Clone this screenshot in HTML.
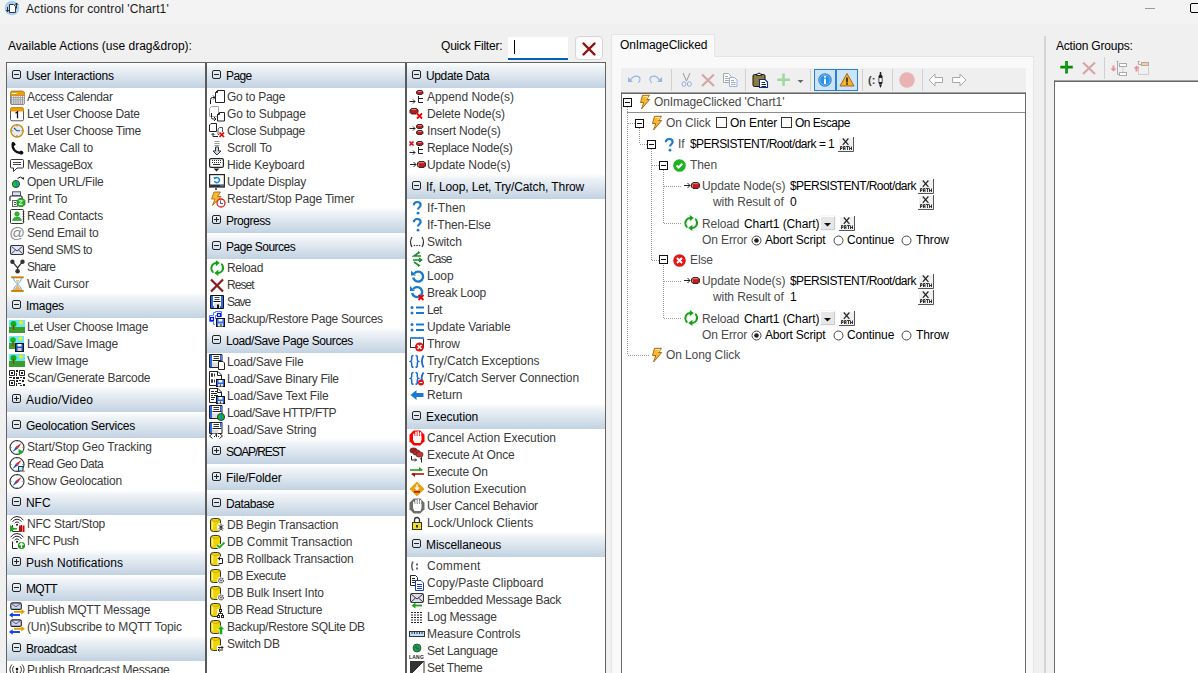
<!DOCTYPE html>
<html><head><meta charset="utf-8"><style>
*{box-sizing:border-box} svg{display:block;overflow:visible}
body{margin:0;width:1198px;height:673px;overflow:hidden;background:#f0f0f0;position:relative;font-family:'Liberation Sans',sans-serif;font-size:12px;color:#000}
.abs{position:absolute}
.title{position:absolute;left:0;top:0;width:1198px;height:24px;background:#f3f3f3}
.lp{position:absolute;left:6px;top:62px;width:600px;height:620px;border:1px solid #646464;background:#fff}
.col{position:absolute;top:0;width:198px;height:620px;background:#fff;overflow:hidden}
.sep{position:absolute;top:0;width:2px;height:620px;background:#5a5a5a}
.gh{height:25px;position:relative;background:linear-gradient(#fdfefe,#eff3f7 18%,#c2d2e2);white-space:nowrap}
.gap{height:1px}
.box{position:absolute;left:5px;top:7px;width:9px;height:9px}
.box svg{display:block}
.ght{position:absolute;left:19px;top:6px;line-height:14px;color:#000;letter-spacing:-0.05px}
.it{height:17px;position:relative;white-space:nowrap}
.ic{position:absolute;left:2px;top:1px;width:16px;height:16px}
.ic svg{display:block}
.itt{position:absolute;left:20px;top:2px;line-height:15px;color:#3a3a3a;letter-spacing:-0.3px}
.t{position:absolute;white-space:nowrap;line-height:14px}
</style></head>
<body>
<div class="title"></div><div class="abs" style="left:4px;top:0px;width:16px;height:16px"><svg width="16" height="16" viewBox="0 0 16 16"><circle cx="8" cy="8" r="7.3" fill="#a6cff6"/><path d="M5.5 4.5h4l2 2v6h-6z" fill="#fff" stroke="#222" stroke-width="0.9"/><path d="M3.5 7v4.5M2 10l1.5 1.8 1.5-1.8M12.5 3v5.5M11 4.8l1.5-1.8 1.5 1.8" stroke="#222" stroke-width="0.9" fill="none"/></svg></div><div class="t" style="left:26px;top:2px;color:#1a1a1a;letter-spacing:0.1px">Actions for control 'Chart1'</div><div class="abs" style="left:1145px;top:8px;width:10px;height:1px;background:#999"></div><div class="abs" style="left:1190px;top:3px;width:14px;height:10px;border:1.5px solid #000;border-radius:2px"></div><div class="t" style="left:8px;top:39px">Available Actions (use drag&amp;drop):</div><div class="t" style="left:441px;top:39px;letter-spacing:-0.2px">Quick Filter:</div><div class="abs" style="left:508px;top:37px;width:60px;height:23px;background:#fff;border-bottom:2px solid #005fb8"></div><div class="abs" style="left:514px;top:40px;width:1px;height:14px;background:#000"></div><div class="abs" style="left:575px;top:36px;width:28px;height:24px;background:#fbfbfb;border:1px solid #d5d5d5;border-radius:4px"></div><div class="abs" style="left:581px;top:41px;width:16px;height:16px"><svg width="16" height="16" viewBox="0 0 16 16"><path d="M2.5 2.5l11 11M13.5 2.5l-11 11" stroke="#8a1010" stroke-width="2.4" stroke-linecap="round"/></svg></div><div class="lp"><div class="col" style="left:0"><div class="gh"><span class="box"><svg width="9" height="9" viewBox="0 0 9 9"><rect x="0.5" y="0.5" width="8" height="8" rx="1.5" fill="none" stroke="#222"/><path d="M2 4.5h5" stroke="#222"/></svg></span><span class="ght" style="letter-spacing:-0.175px">User Interactions</span></div>
<div class="it"><span class="ic"><svg width="16" height="16" viewBox="0 0 16 16"><rect x="1.5" y="2.5" width="14" height="13" rx="1.5" fill="#9a9a9a" stroke="#888"/><g fill="#fff"><rect x="3" y="7" width="1.2" height="1.2"/><rect x="5.2" y="7" width="1.2" height="1.2"/><rect x="7.4" y="7" width="1.2" height="1.2"/><rect x="9.6" y="7" width="1.2" height="1.2"/><rect x="11.8" y="7" width="1.2" height="1.2"/><rect x="14" y="7" width="1.2" height="1.2"/><rect x="3" y="9.2" width="1.2" height="1.2"/><rect x="5.2" y="9.2" width="1.2" height="1.2"/><rect x="7.4" y="9.2" width="1.2" height="1.2"/><rect x="9.6" y="9.2" width="1.2" height="1.2"/><rect x="11.8" y="9.2" width="1.2" height="1.2"/><rect x="14" y="9.2" width="1.2" height="1.2"/><rect x="3" y="11.4" width="1.2" height="1.2"/><rect x="5.2" y="11.4" width="1.2" height="1.2"/><rect x="7.4" y="11.4" width="1.2" height="1.2"/><rect x="9.6" y="11.4" width="1.2" height="1.2"/><rect x="11.8" y="11.4" width="1.2" height="1.2"/><rect x="14" y="11.4" width="1.2" height="1.2"/><rect x="3" y="13.4" width="1.2" height="1.2"/><rect x="5.2" y="13.4" width="1.2" height="1.2"/><rect x="7.4" y="13.4" width="1.2" height="1.2"/><rect x="9.6" y="13.4" width="1.2" height="1.2"/><rect x="11.8" y="13.4" width="1.2" height="1.2"/><rect x="14" y="13.4" width="1.2" height="1.2"/></g><path d="M1.5 6V4a1.5 1.5 0 0 1 1.5-1.5h11a1.5 1.5 0 0 1 1.5 1.5v2z" fill="#f5a000" stroke="#e09000"/><path d="M3 4.5h4.5" stroke="#fff" stroke-width="1"/><path d="M3 1v1.5M5 1v1.5M7 1v1.5M9 1v1.5M11 1v1.5M13 1v1.5" stroke="#777" stroke-width="0.8"/></svg></span><span class="itt" style="letter-spacing:-0.342px">Access Calendar</span></div>
<div class="it"><span class="ic"><svg width="16" height="16" viewBox="0 0 16 16"><rect x="1.5" y="1.8" width="13" height="13" rx="1.5" fill="#fff" stroke="#555"/><path d="M1.5 5V3.3a1.5 1.5 0 0 1 1.5-1.5h10a1.5 1.5 0 0 1 1.5 1.5V5z" fill="#f5a000" stroke="#e09000" stroke-width="0.8"/><path d="M6.5 7.2l2-1.5v6.5" stroke="#111" stroke-width="1.3" fill="none"/></svg></span><span class="itt" style="letter-spacing:-0.310px">Let User Choose Date</span></div>
<div class="it"><span class="ic"><svg width="16" height="16" viewBox="0 0 16 16"><circle cx="8" cy="7.8" r="6.2" fill="#ddeef8" stroke="#d08800" stroke-width="1.4"/><path d="M8 2.3v1.2M8 12.1v1.2M2.5 7.8h1.2M12.3 7.8h1.2" stroke="#555" stroke-width="0.8"/><path d="M5 5l3 2.8h3" stroke="#444" stroke-width="1.1" fill="none"/></svg></span><span class="itt" style="letter-spacing:-0.269px">Let User Choose Time</span></div>
<div class="it"><span class="ic"><svg width="16" height="16" viewBox="0 0 16 16"><path d="M4.5 3.8Q2.5 6.5 5.5 10.2Q8.5 13.5 12 12.5" stroke="#111" stroke-width="2.4" fill="none" stroke-linecap="round"/><path d="M2.3 4.5Q2.5 1.8 4.2 1.8Q5.5 2.2 6.8 4.6Q6 6 4.5 6.2z" fill="#111"/><path d="M10.2 13.6Q10.5 11 12 10.6Q14 10.8 14.6 12.8Q14 14.8 12 14.8z" fill="#111"/></svg></span><span class="itt" style="letter-spacing:-0.046px">Make Call to</span></div>
<div class="it"><span class="ic"><svg width="16" height="16" viewBox="0 0 16 16"><path d="M2.5 2.5h11a1 1 0 0 1 1 1v6.5a1 1 0 0 1-1 1h-5.5l-3.5 3.5v-3.5h-2a1 1 0 0 1-1-1v-6.5a1 1 0 0 1 1-1z" fill="#fff" stroke="#333"/><path d="M4 5.5h8M4 7.5h8" stroke="#444"/></svg></span><span class="itt" style="letter-spacing:-0.389px">MessageBox</span></div>
<div class="it"><span class="ic"><svg width="16" height="16" viewBox="0 0 16 16"><circle cx="7" cy="10" r="3.6" fill="#10d020" stroke="#222" stroke-width="0.8"/><path d="M8 6.8q-2 1.5-0.5 3t-1.2 3.4" stroke="#1a7ae0" stroke-width="1.4" fill="none"/><path d="M8.5 4.5q3-3 5.5 0" stroke="#222" stroke-width="1" fill="none"/><path d="M12.3 4.6l2.6 1.2 0.2-2.8z" fill="#222"/></svg></span><span class="itt" style="letter-spacing:-0.217px">Open URL/File</span></div>
<div class="it"><span class="ic"><svg width="16" height="16" viewBox="0 0 16 16"><rect x="3.5" y="0.8" width="8" height="4" fill="#dde0f8" stroke="#444" stroke-width="0.9"/><path d="M1 10V6q0-1 1-1h10q1 0 1 1v4" fill="#fff" stroke="#333" stroke-width="1.2"/><rect x="3.5" y="9.5" width="5" height="6" fill="#eee" stroke="#555" stroke-width="0.9"/><path d="M5 11.5h2M5 13.5h2" stroke="#555"/><path d="M10 7.5h4l2 2v4l-2 2h-4l-2-2v-4z" fill="#22b022" stroke="#188018" stroke-width="0.7"/><path d="M10 9.8h3.5l-3.5 3.5h3.5" stroke="#fff" stroke-width="1" fill="none"/></svg></span><span class="itt" style="letter-spacing:-0.014px">Print To</span></div>
<div class="it"><span class="ic"><svg width="16" height="16" viewBox="0 0 16 16"><rect x="1.5" y="1.5" width="13" height="14" rx="1" fill="#fff" stroke="#333"/><path d="M14.5 3v1.2M14.5 5.5v1.2M14.5 8v1.2M14.5 10.5v1.2M14.5 13v1.2" stroke="#333" stroke-width="1.6"/><circle cx="8" cy="6" r="2.3" fill="#30b830" stroke="#1a801a" stroke-width="0.5"/><path d="M3.5 12.5c0.5-2.5 2-3.5 4.5-3.5s4 1 4.5 3.5z" fill="#30b830" stroke="#1a801a" stroke-width="0.5"/></svg></span><span class="itt" style="letter-spacing:-0.267px">Read Contacts</span></div>
<div class="it"><span class="ic"><svg width="16" height="16" viewBox="0 0 16 16"><text x="0.3" y="13.2" font-size="15.5" font-family="Liberation Sans" fill="#8a8a8a">@</text></svg></span><span class="itt" style="letter-spacing:-0.250px">Send Email to</span></div>
<div class="it"><span class="ic"><svg width="16" height="16" viewBox="0 0 16 16"><rect x="1.5" y="3.5" width="13" height="9" rx="1.5" fill="#dde4f8" stroke="#333" stroke-width="1.1"/><path d="M2.5 4.5l5.5 4.5 5.5-4.5M2.5 11.5l4-3.5M13.5 11.5l-4-3.5" stroke="#333" stroke-width="0.9" fill="none"/></svg></span><span class="itt" style="letter-spacing:-0.520px">Send SMS to</span></div>
<div class="it"><span class="ic"><svg width="16" height="16" viewBox="0 0 16 16"><path d="M3.4 2.7l5.2 6.3 4.9-6.3M8.6 9v3" stroke="#333" stroke-width="1.3" fill="none"/><circle cx="3.4" cy="2.7" r="2.2" fill="#333"/><circle cx="13.5" cy="2.7" r="2.2" fill="#333"/><circle cx="8.6" cy="12.3" r="2.3" fill="#333"/></svg></span><span class="itt" style="letter-spacing:-0.750px">Share</span></div>
<div class="it"><span class="ic"><svg width="16" height="16" viewBox="0 0 16 16"><rect x="2.2" y="0.4" width="12.5" height="1.9" fill="#c88000"/><rect x="2.2" y="14" width="12.5" height="1.9" fill="#c88000"/><path d="M4.5 2.3q0 3 4 5.8q-4 2.8-4 5.9M12.5 2.3q0 3-4 5.8q4 2.8 4 5.9" stroke="#30a8f0" stroke-width="0.9" fill="none"/><path d="M6.5 4h4l-2 3.5z" fill="#f0c080"/><path d="M8.5 8.5l3.5 5.5h-7z" fill="#f0b060"/></svg></span><span class="itt" style="letter-spacing:-0.100px">Wait Cursor</span></div>
<div class="gap"></div>
<div class="gh"><span class="box"><svg width="9" height="9" viewBox="0 0 9 9"><rect x="0.5" y="0.5" width="8" height="8" rx="1.5" fill="none" stroke="#222"/><path d="M2 4.5h5" stroke="#222"/></svg></span><span class="ght" style="letter-spacing:-0.250px">Images</span></div>
<div class="it"><span class="ic"><svg width="16" height="16" viewBox="0 0 16 16"><rect x="0" y="1" width="16" height="13" fill="#66e6f6"/><rect x="0" y="8" width="16" height="6" fill="#3c9c2c"/><circle cx="4.5" cy="5" r="3" fill="#10b010"/><path d="M4.5 6v5" stroke="#7a4a10" stroke-width="1.2"/><circle cx="12" cy="3.5" r="2" fill="#f4f000"/></svg></span><span class="itt" style="letter-spacing:-0.270px">Let User Choose Image</span></div>
<div class="it"><span class="ic"><svg width="16" height="16" viewBox="0 0 16 16"><rect x="0" y="0" width="15" height="13" fill="#6ee8f8"/><rect x="0" y="7" width="15" height="6" fill="#3fa030"/><circle cx="4" cy="4" r="2.8" fill="#11bb11"/><path d="M4 5v5" stroke="#7a4a10" stroke-width="1.2"/><circle cx="11.5" cy="2.5" r="1.8" fill="#f8f000"/><rect x="6.5" y="7.5" width="8" height="8" fill="#1a4fc0" stroke="#111"/><rect x="8.5" y="8" width="4" height="2.5" fill="#fff"/><rect x="8.5" y="12" width="4" height="3" fill="#ccc"/></svg></span><span class="itt" style="letter-spacing:-0.215px">Load/Save Image</span></div>
<div class="it"><span class="ic"><svg width="16" height="16" viewBox="0 0 16 16"><rect x="0" y="1" width="16" height="13" fill="#66e6f6"/><rect x="0" y="8" width="16" height="6" fill="#3c9c2c"/><circle cx="4.5" cy="5" r="3" fill="#10b010"/><path d="M4.5 6v5" stroke="#7a4a10" stroke-width="1.2"/><circle cx="12" cy="3.5" r="2" fill="#f4f000"/></svg></span><span class="itt" style="letter-spacing:-0.122px">View Image</span></div>
<div class="it"><span class="ic"><svg width="16" height="16" viewBox="0 0 16 16"><path d="M0.5 0.5h5v5h-5zM10.5 0.5h5v5h-5zM0.5 10.5h5v5h-5z" fill="none" stroke="#222"/><path d="M2 2h2v2h-2zM12 2h2v2h-2zM2 12h2v2h-2z" fill="#222"/><path d="M7 0h2v2h-2zM7 3h1v3h-1zM0 7h3v1h-3zM4 7h2v2h-2zM7 7h3v2h-3zM11 7h2v1h-2zM14 7h2v2h-2zM7 10h2v2h-2zM10 10h2v1h-2zM13 10h2v2h-2zM7 13h1v3h-1zM9 13h3v1h-3zM11 15h2v1h-2zM14 14h2v2h-2z" fill="#222"/></svg></span><span class="itt" style="letter-spacing:-0.260px">Scan/Generate Barcode</span></div>
<div class="gap"></div>
<div class="gh"><span class="box"><svg width="9" height="9" viewBox="0 0 9 9"><rect x="0.5" y="0.5" width="8" height="8" rx="1.5" fill="none" stroke="#222"/><path d="M2 4.5h5M4.5 2v5" stroke="#222"/></svg></span><span class="ght" style="letter-spacing:0.250px">Audio/Video</span></div>
<div class="gap"></div>
<div class="gh"><span class="box"><svg width="9" height="9" viewBox="0 0 9 9"><rect x="0.5" y="0.5" width="8" height="8" rx="1.5" fill="none" stroke="#222"/><path d="M2 4.5h5" stroke="#222"/></svg></span><span class="ght" style="letter-spacing:-0.218px">Geolocation Services</span></div>
<div class="it"><span class="ic"><svg width="16" height="16" viewBox="0 0 16 16"><circle cx="8" cy="8.5" r="7" fill="#fff" stroke="#333" stroke-width="1.1"/><path d="M8 2v1.2M8 13.8v1.2M1.5 8.5h1.2M13.3 8.5h1.2" stroke="#666" stroke-width="0.7"/><path d="M3.5 13l3.5-5.5 2 2z" fill="#1a50c0"/><path d="M12.5 4l-3.5 5.5-2-2z" fill="#e02020"/><path d="M9.5 10v6l5.5-3z" fill="#22aa22"/></svg></span><span class="itt" style="letter-spacing:-0.146px">Start/Stop Geo Tracking</span></div>
<div class="it"><span class="ic"><svg width="16" height="16" viewBox="0 0 16 16"><circle cx="8" cy="8.5" r="7" fill="#fff" stroke="#333" stroke-width="1.1"/><path d="M8 2v1.2M8 13.8v1.2M1.5 8.5h1.2M13.3 8.5h1.2" stroke="#666" stroke-width="0.7"/><path d="M3.5 13l3.5-5.5 2 2z" fill="#1a50c0"/><path d="M12.5 4l-3.5 5.5-2-2z" fill="#e02020"/><rect x="9.5" y="10.5" width="4.5" height="4.5" fill="#aee" stroke="#236"/><circle cx="15" cy="15.3" r="0.9" fill="#e08000"/></svg></span><span class="itt" style="letter-spacing:-0.567px">Read Geo Data</span></div>
<div class="it"><span class="ic"><svg width="16" height="16" viewBox="0 0 16 16"><circle cx="8" cy="8.5" r="7" fill="#fff" stroke="#333" stroke-width="1.1"/><path d="M8 2v1.2M8 13.8v1.2M1.5 8.5h1.2M13.3 8.5h1.2" stroke="#666" stroke-width="0.7"/><path d="M3.5 13l3.5-5.5 2 2z" fill="#1a50c0"/><path d="M12.5 4l-3.5 5.5-2-2z" fill="#e02020"/></svg></span><span class="itt" style="letter-spacing:-0.140px">Show Geolocation</span></div>
<div class="gap"></div>
<div class="gh"><span class="box"><svg width="9" height="9" viewBox="0 0 9 9"><rect x="0.5" y="0.5" width="8" height="8" rx="1.5" fill="none" stroke="#222"/><path d="M2 4.5h5" stroke="#222"/></svg></span><span class="ght">NFC</span></div>
<div class="it"><span class="ic"><svg width="16" height="16" viewBox="0 0 16 16"><path d="M1.6 4.3a7.3 7.3 0 0 1 12.8 0M3.6 5.8a5 5 0 0 1 8.8 0M5.6 7.3a2.8 2.8 0 0 1 4.8 0" stroke="#222" stroke-width="1" fill="none"/><circle cx="8" cy="8.8" r="1" fill="#111"/><path d="M3.5 9v6.5h9V9" stroke="#222" fill="none" stroke-width="0.9"/><path d="M1 9v7l4-2.5h3v-1.5h-3z" fill="#10b010"/><rect x="10" y="9.5" width="2" height="6.5" fill="#e00"/><rect x="13.5" y="9.5" width="2" height="6.5" fill="#e00"/></svg></span><span class="itt" style="letter-spacing:-0.238px">NFC Start/Stop</span></div>
<div class="it"><span class="ic"><svg width="16" height="16" viewBox="0 0 16 16"><path d="M1.6 4.3a7.3 7.3 0 0 1 12.8 0M3.6 5.8a5 5 0 0 1 8.8 0M5.6 7.3a2.8 2.8 0 0 1 4.8 0" stroke="#222" stroke-width="1" fill="none"/><circle cx="8" cy="8.8" r="1" fill="#111"/><path d="M3.5 8.5v7h5" stroke="#222" fill="none" stroke-width="1"/><circle cx="12.5" cy="12.5" r="3.6" fill="#1a9a1a"/><path d="M12.5 15v-4.5M10.6 12.3l1.9-2 1.9 2" stroke="#fff" stroke-width="1.3" fill="none"/></svg></span><span class="itt" style="letter-spacing:-0.500px">NFC Push</span></div>
<div class="gap"></div>
<div class="gh"><span class="box"><svg width="9" height="9" viewBox="0 0 9 9"><rect x="0.5" y="0.5" width="8" height="8" rx="1.5" fill="none" stroke="#222"/><path d="M2 4.5h5M4.5 2v5" stroke="#222"/></svg></span><span class="ght" style="letter-spacing:0.056px">Push Notifications</span></div>
<div class="gap"></div>
<div class="gh"><span class="box"><svg width="9" height="9" viewBox="0 0 9 9"><rect x="0.5" y="0.5" width="8" height="8" rx="1.5" fill="none" stroke="#222"/><path d="M2 4.5h5" stroke="#222"/></svg></span><span class="ght" style="letter-spacing:-0.784px">MQTT</span></div>
<div class="it"><span class="ic"><svg width="16" height="16" viewBox="0 0 16 16"><rect x="1.8" y="0.9" width="10.5" height="6.5" rx="1.5" fill="#d0d4f4" stroke="#222" stroke-width="1.1"/><path d="M2.8 1.8l4.2 3 4.2-3" stroke="#444" stroke-width="0.8" fill="none"/><path d="M5 9.8h8.5" stroke="#e0a000" stroke-width="1.9"/><path d="M12.3 7l3.7 2.8-3.7 2.8z" fill="#e0a000"/><path d="M2.5 13h8.5" stroke="#0a40f0" stroke-width="1.9"/><path d="M3.7 10.2L0 13l3.7 2.8z" fill="#0a40f0"/></svg></span><span class="itt" style="letter-spacing:-0.269px">Publish MQTT Message</span></div>
<div class="it"><span class="ic"><svg width="16" height="16" viewBox="0 0 16 16"><rect x="1.8" y="0.9" width="10.5" height="6.5" rx="1.5" fill="#d0d4f4" stroke="#222" stroke-width="1.1"/><path d="M2.8 1.8l4.2 3 4.2-3" stroke="#444" stroke-width="0.8" fill="none"/><path d="M5 9.8h8.5" stroke="#e0a000" stroke-width="1.9"/><path d="M12.3 7l3.7 2.8-3.7 2.8z" fill="#e0a000"/><path d="M2.5 13h8.5" stroke="#0a40f0" stroke-width="1.9"/><path d="M3.7 10.2L0 13l3.7 2.8z" fill="#0a40f0"/></svg></span><span class="itt" style="letter-spacing:-0.123px">(Un)Subscribe to MQTT Topic</span></div>
<div class="gap"></div>
<div class="gh"><span class="box"><svg width="9" height="9" viewBox="0 0 9 9"><rect x="0.5" y="0.5" width="8" height="8" rx="1.5" fill="none" stroke="#222"/><path d="M2 4.5h5" stroke="#222"/></svg></span><span class="ght" style="letter-spacing:-0.400px">Broadcast</span></div>
<div class="it"><span class="ic"><svg width="16" height="16" viewBox="0 0 16 16"><path d="M5 4a5 5 0 0 0 0 7M3 2.5a7 7 0 0 0 0 10M11 4a5 5 0 0 1 0 7M13 2.5a7 7 0 0 1 0 10" stroke="#333" fill="none"/><circle cx="8" cy="7" r="1.3" fill="#111"/><path d="M8 7l-2 9h4z" fill="#111"/></svg></span><span class="itt" style="letter-spacing:-0.250px">Publish Broadcast Message</span></div>
<div class="gap"></div></div><div class="sep" style="left:198px"></div><div class="col" style="left:200px"><div class="gh"><span class="box"><svg width="9" height="9" viewBox="0 0 9 9"><rect x="0.5" y="0.5" width="8" height="8" rx="1.5" fill="none" stroke="#222"/><path d="M2 4.5h5" stroke="#222"/></svg></span><span class="ght" style="letter-spacing:-0.583px">Page</span></div>
<div class="it"><span class="ic"><svg width="16" height="16" viewBox="0 0 16 16"><path d="M8.5 1.5h7v12h-9v-10z" fill="#fff" stroke="#222"/><path d="M6.5 3.5h2v-2" fill="none" stroke="#222"/><path d="M1.5 15v-4.5q0-2 2-2h2.5" stroke="#222" fill="none"/><path d="M4 6.5l2 2-2 2" stroke="#222" fill="none"/></svg></span><span class="itt" style="letter-spacing:-0.255px">Go to Page</span></div>
<div class="it"><span class="ic"><svg width="16" height="16" viewBox="0 0 16 16"><path d="M2.5 0.5h7v10h-9v-8z" fill="#fff" stroke="#aaa"/><path d="M10.5 6.5h5v8.5h-7v-6.5z" fill="#fff" stroke="#222"/><path d="M8.5 8.5h2v-2" fill="none" stroke="#222"/><path d="M2.5 7v4.5q0 1.5 1.5 1.5h2.5" stroke="#222" fill="none"/><path d="M5 11l2 2-2 2" stroke="#222" fill="none"/></svg></span><span class="itt" style="letter-spacing:-0.150px">Go to Subpage</span></div>
<div class="it"><span class="ic"><svg width="16" height="16" viewBox="0 0 16 16"><path d="M2 0.5h5.5v8h-7v-6.5z" fill="#fff" stroke="#222"/><path d="M10.5 4.5h3v7h-4.5v-5.5z" fill="#fff" stroke="#555"/><path d="M9 13.5h-5v-3M2.5 12l1.5-1.5 1.5 1.5" stroke="#222" fill="none"/><path d="M10.5 9.5l4.5 4.5M15 9.5l-4.5 4.5" stroke="#fff" stroke-width="3"/><path d="M10.5 9.5l4.5 4.5M15 9.5l-4.5 4.5" stroke="#e00" stroke-width="1.7"/></svg></span><span class="itt" style="letter-spacing:-0.316px">Close Subpage</span></div>
<div class="it"><span class="ic"><svg width="16" height="16" viewBox="0 0 16 16"><path d="M5.5 1.5h5M5.5 3.5h5M5.5 5.5h5" stroke="#999"/><path d="M6.5 7v4h-2.5l4 4 4-4h-2.5v-4z" fill="#c8d4f0" stroke="#333"/></svg></span><span class="itt" style="letter-spacing:-0.099px">Scroll To</span></div>
<div class="it"><span class="ic"><svg width="16" height="16" viewBox="0 0 16 16"><rect x="0.6" y="1.6" width="13.8" height="8.8" rx="1.5" fill="#fff" stroke="#222" stroke-width="1.2"/><g fill="#333"><rect x="3" y="3" width="1" height="1"/><rect x="5" y="3" width="1" height="1"/><rect x="7" y="3" width="1" height="1"/><rect x="9" y="3" width="1" height="1"/><rect x="11" y="3" width="1" height="1"/><rect x="3" y="5" width="1" height="1"/><rect x="5" y="5" width="1" height="1"/><rect x="7" y="5" width="1" height="1"/><rect x="9" y="5" width="1" height="1"/><rect x="11" y="5" width="1" height="1"/><rect x="4" y="7" width="7" height="1"/></g><path d="M4.5 11.5h6l-3 3z" fill="#222"/></svg></span><span class="itt" style="letter-spacing:-0.150px">Hide Keyboard</span></div>
<div class="it"><span class="ic"><svg width="16" height="16" viewBox="0 0 16 16"><rect x="0.6" y="0.6" width="14.8" height="12.4" fill="#fff" stroke="#222" stroke-width="1.2"/><rect x="0" y="10.5" width="16" height="2.5" fill="#333"/><path d="M11.5 11.8h1M13.5 11.8h1" stroke="#8cd0f0"/><path d="M7 14v2" stroke="#333" stroke-width="1.5"/><path d="M6 4.2a2.6 2.6 0 1 1-0.6 2.8" stroke="#1a88d8" stroke-width="1.6" fill="none"/><path d="M4.3 3l3 0.3-1.8 2.5z" fill="#1a88d8"/></svg></span><span class="itt" style="letter-spacing:-0.162px">Update Display</span></div>
<div class="it"><span class="ic"><svg width="16" height="16" viewBox="0 0 16 16"><path d="M5 1h6.5l-3 4.5h3.5l-8.5 9 2.5-6.5h-3.5z" fill="#f6b935" stroke="#b06a10" stroke-width="0.9" stroke-linejoin="round"/><circle cx="12" cy="12" r="4" fill="#f4f8fc" stroke="#e02020" stroke-width="1.3"/><path d="M11.5 9.5v3h2.5" stroke="#555" fill="none"/></svg></span><span class="itt" style="letter-spacing:-0.182px">Restart/Stop Page Timer</span></div>
<div class="gap"></div>
<div class="gh"><span class="box"><svg width="9" height="9" viewBox="0 0 9 9"><rect x="0.5" y="0.5" width="8" height="8" rx="1.5" fill="none" stroke="#222"/><path d="M2 4.5h5M4.5 2v5" stroke="#222"/></svg></span><span class="ght" style="letter-spacing:-0.479px">Progress</span></div>
<div class="gap"></div>
<div class="gh"><span class="box"><svg width="9" height="9" viewBox="0 0 9 9"><rect x="0.5" y="0.5" width="8" height="8" rx="1.5" fill="none" stroke="#222"/><path d="M2 4.5h5" stroke="#222"/></svg></span><span class="ght" style="letter-spacing:-0.523px">Page Sources</span></div>
<div class="it"><span class="ic"><svg width="16" height="16" viewBox="0 0 16 16"><path d="M3.8 12Q1.3 8.8 3 5.5Q4.5 3.2 7.2 3" stroke="#16a016" stroke-width="1.9" fill="none" stroke-linecap="round"/><path d="M6.8 0L10.8 2.9L6.8 6.2z" fill="#16a016"/><path d="M12.8 4.2Q15.2 7.5 13.4 10.6Q12 12.8 9.2 13" stroke="#16a016" stroke-width="1.9" fill="none" stroke-linecap="round"/><path d="M9.4 16L5.2 13.1L9.4 9.8z" fill="#16a016"/></svg></span><span class="itt" style="letter-spacing:-0.340px">Reload</span></div>
<div class="it"><span class="ic"><svg width="16" height="16" viewBox="0 0 16 16"><path d="M2 2.5l12 12M14 2.5l-12 12" stroke="#8a1a1a" stroke-width="2.2"/></svg></span><span class="itt" style="letter-spacing:-0.950px">Reset</span></div>
<div class="it"><span class="ic"><svg width="16" height="16" viewBox="0 0 16 16"><path d="M1.5 1.5h13v13h-13z" fill="#fff" stroke="#111"/><rect x="2" y="2" width="2" height="12" fill="#2a6ae8"/><rect x="12" y="2" width="2" height="12" fill="#2a6ae8"/><rect x="4" y="12" width="8" height="2" fill="#2a6ae8"/><path d="M5.5 3.5h5M5.5 5.5h5" stroke="#444"/><path d="M4.5 7.5h7" stroke="#111"/><rect x="5" y="9.5" width="6" height="4.5" fill="#ddd"/><rect x="8" y="10.5" width="2" height="3.5" fill="#111"/></svg></span><span class="itt" style="letter-spacing:-1.033px">Save</span></div>
<div class="it"><span class="ic"><svg width="16" height="16" viewBox="0 0 16 16"><path d="M12.5 6V0.5H6.5V1.5H4.5V4.5H0.5V10.5H4.5V13.5H6" stroke="#4a80ff" fill="none"/><path d="M6.5 8V4.5H8" stroke="#4a80ff" fill="none"/><rect x="1.5" y="6.5" width="3" height="3" fill="#fff" stroke="#0a0af0" stroke-width="1.2"/><rect x="8.5" y="2.5" width="3" height="3" fill="#fff" stroke="#0a0af0" stroke-width="1.2"/><rect x="7.5" y="7.5" width="8" height="8" fill="#3a70f0" stroke="#111"/><rect x="9.5" y="8" width="4" height="2.5" fill="#fff"/><rect x="9" y="12.5" width="5" height="3" fill="#ddd"/><rect x="11.5" y="13" width="1" height="2.5" fill="#222"/></svg></span><span class="itt" style="letter-spacing:-0.308px">Backup/Restore Page Sources</span></div>
<div class="gap"></div>
<div class="gh"><span class="box"><svg width="9" height="9" viewBox="0 0 9 9"><rect x="0.5" y="0.5" width="8" height="8" rx="1.5" fill="none" stroke="#222"/><path d="M2 4.5h5" stroke="#222"/></svg></span><span class="ght" style="letter-spacing:-0.421px">Load/Save Page Sources</span></div>
<div class="it"><span class="ic"><svg width="16" height="16" viewBox="0 0 16 16"><path d="M0.5 0.5h12.5v13h-12.5z" fill="#fff" stroke="#222"/><rect x="1" y="1" width="2" height="12" fill="#2a6ae8"/><rect x="11" y="1" width="1.5" height="5" fill="#2a6ae8"/><path d="M4.5 2.5h5.5M4.5 4.5h5.5" stroke="#333"/><path d="M3.5 6.5h9" stroke="#222"/><rect x="3" y="8.5" width="6" height="4.5" fill="#ddd"/><path d="M9.5 7.5h4.5l1.5 1.5v6.5h-6z" fill="#fff" stroke="#222"/></svg></span><span class="itt" style="letter-spacing:-0.269px">Load/Save File</span></div>
<div class="it"><span class="ic"><svg width="16" height="16" viewBox="0 0 16 16"><path d="M0.5 0.5h8.5l3.5 3.5v10.5h-12z" fill="#fff" stroke="#222"/><path d="M8.5 0.5v4h4" fill="none" stroke="#222"/><path d="M2.5 2.5h1v3h-1zM5.5 2.5v3M2.5 8.5h1v3h-1zM5.5 8.5v3" stroke="#222" stroke-width="0.9" fill="none"/><rect x="7.5" y="8.5" width="8" height="7" fill="#2a6ae8" stroke="#111"/><rect x="9.5" y="9" width="4" height="2.5" fill="#fff"/><rect x="9" y="13" width="5" height="2.5" fill="#ddd"/><rect x="11" y="13.5" width="1" height="2" fill="#333"/></svg></span><span class="itt" style="letter-spacing:-0.270px">Load/Save Binary File</span></div>
<div class="it"><span class="ic"><svg width="16" height="16" viewBox="0 0 16 16"><path d="M0.5 0.5h8.5l3.5 3.5v10.5h-12z" fill="#fff" stroke="#222"/><path d="M8.5 0.5v4h4" fill="none" stroke="#222"/><path d="M2 3.5h3M6 3.5h2M2 5.5h6M2 7.5h2M5 7.5h4M2 9.5h4M2 11.5h3" stroke="#222"/><rect x="7.5" y="8.5" width="8" height="7" fill="#2a6ae8" stroke="#111"/><rect x="9.5" y="9" width="4" height="2.5" fill="#fff"/><rect x="9" y="13" width="5" height="2.5" fill="#ddd"/><rect x="11" y="13.5" width="1" height="2" fill="#333"/></svg></span><span class="itt" style="letter-spacing:-0.200px">Load/Save Text File</span></div>
<div class="it"><span class="ic"><svg width="16" height="16" viewBox="0 0 16 16"><path d="M0.5 0.5h12.5v13h-12.5z" fill="#fff" stroke="#222"/><rect x="1" y="1" width="2" height="12" fill="#2a6ae8"/><rect x="11" y="1" width="1.5" height="5" fill="#2a6ae8"/><path d="M4.5 2.5h5.5M4.5 4.5h5.5" stroke="#333"/><path d="M3.5 6.5h9" stroke="#222"/><rect x="3" y="8.5" width="6" height="4.5" fill="#ddd"/><circle cx="12" cy="12" r="3.6" fill="#10c020" stroke="#222" stroke-width="0.8"/><path d="M13 9q-2 1.5-0.5 3t-1.2 3" stroke="#1a7ae0" stroke-width="1.3" fill="none"/></svg></span><span class="itt" style="letter-spacing:-0.500px">Load/Save HTTP/FTP</span></div>
<div class="it"><span class="ic"><svg width="16" height="16" viewBox="0 0 16 16"><path d="M0.5 0.5h12.5v11h-12.5z" fill="#fff" stroke="#222"/><rect x="1" y="1" width="2" height="10" fill="#2a6ae8"/><rect x="11" y="1" width="1.5" height="4" fill="#2a6ae8"/><path d="M4.5 2.5h5.5M4.5 4.5h5.5" stroke="#333"/><path d="M3.5 6.5h9" stroke="#222"/><rect x="3" y="8" width="6" height="3.5" fill="#ddd"/><path d="M3.5 11.5l-3 2.5 3 2.5M10.5 11.5l3 2.5-3 2.5" stroke="#222" fill="none"/><path d="M5 14.5h1M7 14.5h1M9 14.5h1" stroke="#222"/><rect x="6.5" y="11.5" width="1.5" height="2.5" fill="#222"/></svg></span><span class="itt" style="letter-spacing:-0.180px">Load/Save String</span></div>
<div class="gap"></div>
<div class="gh"><span class="box"><svg width="9" height="9" viewBox="0 0 9 9"><rect x="0.5" y="0.5" width="8" height="8" rx="1.5" fill="none" stroke="#222"/><path d="M2 4.5h5M4.5 2v5" stroke="#222"/></svg></span><span class="ght" style="letter-spacing:-1.100px">SOAP/REST</span></div>
<div class="gap"></div>
<div class="gh"><span class="box"><svg width="9" height="9" viewBox="0 0 9 9"><rect x="0.5" y="0.5" width="8" height="8" rx="1.5" fill="none" stroke="#222"/><path d="M2 4.5h5M4.5 2v5" stroke="#222"/></svg></span><span class="ght" style="letter-spacing:-0.090px">File/Folder</span></div>
<div class="gap"></div>
<div class="gh"><span class="box"><svg width="9" height="9" viewBox="0 0 9 9"><rect x="0.5" y="0.5" width="8" height="8" rx="1.5" fill="none" stroke="#222"/><path d="M2 4.5h5" stroke="#222"/></svg></span><span class="ght" style="letter-spacing:-0.421px">Database</span></div>
<div class="it"><span class="ic"><svg width="16" height="16" viewBox="0 0 16 16"><rect x="1.5" y="1.5" width="10" height="13" rx="3" ry="2.5" fill="#f0d400" stroke="#333"/><path d="M3.5 4v8" stroke="#fff080" stroke-width="1.5"/><path d="M2.5 3.5q4 2 8 0" stroke="#c0a000" fill="none" stroke-width="0.8"/><circle cx="12" cy="10" r="4" fill="#fff"/><path d="M12 6.5v6M9.5 8.3l5 3.4M14.5 8.3l-5 3.4M10.5 13.5l1.5-2 1.5 2" stroke="#222" stroke-width="0.9" fill="none"/></svg></span><span class="itt" style="letter-spacing:-0.247px">DB Begin Transaction</span></div>
<div class="it"><span class="ic"><svg width="16" height="16" viewBox="0 0 16 16"><rect x="1.5" y="1.5" width="10" height="13" rx="3" ry="2.5" fill="#f0d400" stroke="#333"/><path d="M3.5 4v8" stroke="#fff080" stroke-width="1.5"/><path d="M2.5 3.5q4 2 8 0" stroke="#c0a000" fill="none" stroke-width="0.8"/><path d="M8 11l2.5 2.5 5-5" stroke="#fff" stroke-width="3.5" fill="none"/><path d="M8 11l2.5 2.5 5-5" stroke="#22aa22" stroke-width="1.8" fill="none"/></svg></span><span class="itt" style="letter-spacing:-0.060px">DB Commit Transaction</span></div>
<div class="it"><span class="ic"><svg width="16" height="16" viewBox="0 0 16 16"><rect x="1.5" y="1.5" width="10" height="13" rx="3" ry="2.5" fill="#f0d400" stroke="#333"/><path d="M3.5 4v8" stroke="#fff080" stroke-width="1.5"/><path d="M2.5 3.5q4 2 8 0" stroke="#c0a000" fill="none" stroke-width="0.8"/><rect x="8.5" y="5.5" width="6" height="8" fill="#fff"/><path d="M10 7.5h3.5v5h-4" stroke="#222" fill="none"/><path d="M11 5.5l-2.5 2 2.5 2z" fill="#222"/></svg></span><span class="itt" style="letter-spacing:-0.218px">DB Rollback Transaction</span></div>
<div class="it"><span class="ic"><svg width="16" height="16" viewBox="0 0 16 16"><rect x="1.5" y="1.5" width="10" height="13" rx="3" ry="2.5" fill="#f0d400" stroke="#333"/><path d="M3.5 4v8" stroke="#fff080" stroke-width="1.5"/><path d="M2.5 3.5q4 2 8 0" stroke="#c0a000" fill="none" stroke-width="0.8"/><circle cx="12" cy="12.5" r="3.8" fill="#fff"/><circle cx="12" cy="12.5" r="2.3" fill="none" stroke="#555" stroke-width="1.5" stroke-dasharray="1.2 0.6"/><circle cx="12" cy="12.5" r="0.9" fill="#555"/></svg></span><span class="itt" style="letter-spacing:-0.455px">DB Execute</span></div>
<div class="it"><span class="ic"><svg width="16" height="16" viewBox="0 0 16 16"><rect x="1.5" y="1.5" width="10" height="13" rx="3" ry="2.5" fill="#f0d400" stroke="#333"/><path d="M3.5 4v8" stroke="#fff080" stroke-width="1.5"/><path d="M2.5 3.5q4 2 8 0" stroke="#c0a000" fill="none" stroke-width="0.8"/><circle cx="12" cy="12.5" r="3.8" fill="#fff"/><circle cx="12" cy="12.5" r="2.3" fill="none" stroke="#555" stroke-width="1.5" stroke-dasharray="1.2 0.6"/><circle cx="12" cy="12.5" r="0.9" fill="#555"/></svg></span><span class="itt" style="letter-spacing:-0.167px">DB Bulk Insert Into</span></div>
<div class="it"><span class="ic"><svg width="16" height="16" viewBox="0 0 16 16"><rect x="1.5" y="1.5" width="10" height="13" rx="3" ry="2.5" fill="#f0d400" stroke="#333"/><path d="M3.5 4v8" stroke="#fff080" stroke-width="1.5"/><path d="M2.5 3.5q4 2 8 0" stroke="#c0a000" fill="none" stroke-width="0.8"/><rect x="8" y="7" width="8" height="9" fill="#fff"/><rect x="10.5" y="7.5" width="2" height="2" fill="none" stroke="#222"/><rect x="8.5" y="13.5" width="2" height="2" fill="none" stroke="#222"/><rect x="12.5" y="13.5" width="2" height="2" fill="none" stroke="#222"/><path d="M11.5 9.5v2M9.5 13.5v-2h4v2" stroke="#222" fill="none"/></svg></span><span class="itt" style="letter-spacing:-0.338px">DB Read Structure</span></div>
<div class="it"><span class="ic"><svg width="16" height="16" viewBox="0 0 16 16"><rect x="1.5" y="1.5" width="10" height="13" rx="3" ry="2.5" fill="#f0d400" stroke="#333"/><path d="M3.5 4v8" stroke="#fff080" stroke-width="1.5"/><path d="M2.5 3.5q4 2 8 0" stroke="#c0a000" fill="none" stroke-width="0.8"/><path d="M12 6.5l3.8 4h-2.2v5h-3.2v-5h-2.2z" fill="#1aaa1a" stroke="#fff" stroke-width="0.6"/></svg></span><span class="itt" style="letter-spacing:-0.318px">Backup/Restore SQLite DB</span></div>
<div class="it"><span class="ic"><svg width="16" height="16" viewBox="0 0 16 16"><rect x="1.5" y="1.5" width="10" height="13" rx="3" ry="2.5" fill="#f0d400" stroke="#333"/><path d="M3.5 4v8" stroke="#fff080" stroke-width="1.5"/><path d="M2.5 3.5q4 2 8 0" stroke="#c0a000" fill="none" stroke-width="0.8"/><rect x="8" y="9.5" width="8" height="6.5" fill="#fff"/><path d="M9 11.5h5M12.5 10l1.5 1.5-1.5 1.5M14 14h-5M10.5 12.5L9 14l1.5 1.5" stroke="#222" fill="none"/></svg></span><span class="itt" style="letter-spacing:-0.299px">Switch DB</span></div>
<div class="gap"></div></div><div class="sep" style="left:398px"></div><div class="col" style="left:400px"><div class="gh"><span class="box"><svg width="9" height="9" viewBox="0 0 9 9"><rect x="0.5" y="0.5" width="8" height="8" rx="1.5" fill="none" stroke="#222"/><path d="M2 4.5h5" stroke="#222"/></svg></span><span class="ght" style="letter-spacing:-0.370px">Update Data</span></div>
<div class="it"><span class="ic"><svg width="16" height="16" viewBox="0 0 16 16"><path d="M8.7 1.5h4.1l1.2 1.2v1.6l-1.2 1.2h-4.1l-1.2-1.2v-1.6z" fill="#c01818" stroke="#222" stroke-width="0.9"/><path d="M8.9 2.6h3.7" stroke="#f4a0a0" stroke-width="0.8"/><path d="M9.5 7v6.5h4.5M9.5 9.5h4.5" stroke="#222" fill="none"/><path d="M0.5 12.5h5.5M4 10.5l2 2-2 2" stroke="#222" stroke-width="1" fill="none"/></svg></span><span class="itt" style="letter-spacing:-0.039px">Append Node(s)</span></div>
<div class="it"><span class="ic"><svg width="16" height="16" viewBox="0 0 16 16"><path d="M2.5 2.5h5l1.5 1.5v2.5l-1.5 1.5h-5l-1.5-1.5v-2.5z" fill="#c01818" stroke="#222" stroke-width="0.9"/><path d="M2.8 3.6h4.4" stroke="#f4a0a0" stroke-width="0.8"/><path d="M8 7.5l5 5M13 7.5l-5 5" stroke="#fff" stroke-width="3"/><path d="M8 7.5l5 5M13 7.5l-5 5" stroke="#e00" stroke-width="1.8"/></svg></span><span class="itt" style="letter-spacing:-0.207px">Delete Node(s)</span></div>
<div class="it"><span class="ic"><svg width="16" height="16" viewBox="0 0 16 16"><path d="M8.7 1.5h4.1l1.2 1.2v1.6l-1.2 1.2h-4.1l-1.2-1.2v-1.6z" fill="#c01818" stroke="#222" stroke-width="0.9"/><path d="M8.9 2.6h3.7" stroke="#f4a0a0" stroke-width="0.8"/><path d="M8.7 7.5h4.1l1.2 1.2v1.6l-1.2 1.2h-4.1l-1.2-1.2v-1.6z" fill="#c01818" stroke="#222" stroke-width="0.9"/><path d="M8.9 8.6h3.7" stroke="#f4a0a0" stroke-width="0.8"/><path d="M0.5 5.5h5.5M4 3.5l2 2-2 2" stroke="#222" stroke-width="1" fill="none"/></svg></span><span class="itt" style="letter-spacing:-0.177px">Insert Node(s)</span></div>
<div class="it"><span class="ic"><svg width="16" height="16" viewBox="0 0 16 16"><path d="M8.7 1.5h4.1l1.2 1.2v1.6l-1.2 1.2h-4.1l-1.2-1.2v-1.6z" fill="#c01818" stroke="#222" stroke-width="0.9"/><path d="M8.9 2.6h3.7" stroke="#f4a0a0" stroke-width="0.8"/><path d="M0.5 1.5l4 4M4.5 1.5l-4 4" stroke="#e00" stroke-width="1.6"/><path d="M9.5 7v6.5h4.5M9.5 9.5h4.5" stroke="#222" fill="none"/><path d="M0.5 12.5h5.5M4 10.5l2 2-2 2" stroke="#222" stroke-width="1" fill="none"/></svg></span><span class="itt" style="letter-spacing:-0.314px">Replace Node(s)</span></div>
<div class="it"><span class="ic"><svg width="16" height="16" viewBox="0 0 16 16"><path d="M1 7.5h6M4.5 5l2.5 2.5-2.5 2.5" stroke="#222" stroke-width="1" fill="none"/><path d="M10 4.5h5l1.5 1.5v3l-1.5 1.5h-5l-1.5-1.5v-3z" fill="#c41a1a" stroke="#222" stroke-width="0.9"/><path d="M10 5.7h5" stroke="#f0a0a0" stroke-width="0.8"/><path d="M9.5 6.5v2.5" stroke="#f0a0a0" stroke-width="0.7"/></svg></span><span class="itt" style="letter-spacing:-0.100px">Update Node(s)</span></div>
<div class="gap"></div>
<div class="gh"><span class="box"><svg width="9" height="9" viewBox="0 0 9 9"><rect x="0.5" y="0.5" width="8" height="8" rx="1.5" fill="none" stroke="#222"/><path d="M2 4.5h5" stroke="#222"/></svg></span><span class="ght" style="letter-spacing:-0.097px">If, Loop, Let, Try/Catch, Throw</span></div>
<div class="it"><span class="ic"><svg width="16" height="16" viewBox="0 0 16 16"><path d="M4.8 5.2c0-2 1.5-3.2 3.4-3.2s3.4 1.2 3.4 3c0 2.2-2.6 2.4-2.6 4.6" stroke="#1a7ad0" stroke-width="2.2" fill="none"/><circle cx="9" cy="13.2" r="1.4" fill="#1a7ad0"/></svg></span><span class="itt" style="letter-spacing:0.067px">If-Then</span></div>
<div class="it"><span class="ic"><svg width="16" height="16" viewBox="0 0 16 16"><path d="M4.8 5.2c0-2 1.5-3.2 3.4-3.2s3.4 1.2 3.4 3c0 2.2-2.6 2.4-2.6 4.6" stroke="#1a7ad0" stroke-width="2.2" fill="none"/><circle cx="9" cy="13.2" r="1.4" fill="#1a7ad0"/></svg></span><span class="itt" style="letter-spacing:-0.136px">If-Then-Else</span></div>
<div class="it"><span class="ic"><svg width="16" height="16" viewBox="0 0 16 16"><path d="M3 3q-3 5 0 10M13 3q3 5 0 10" stroke="#333" stroke-width="1.2" fill="none"/><circle cx="5.5" cy="11.5" r="0.8" fill="#333"/><circle cx="8" cy="11.5" r="0.8" fill="#333"/><circle cx="10.5" cy="11.5" r="0.8" fill="#333"/></svg></span><span class="itt" style="letter-spacing:-0.100px">Switch</span></div>
<div class="it"><span class="ic"><svg width="16" height="16" viewBox="0 0 16 16"><path d="M10 1.5l-5 3.5h7M4 9h8M10 7l2.5 2-2.5 2M5 11l5 3.5" stroke="#1a8a30" stroke-width="1.6" fill="none"/><path d="M9 0l2.5 1.5-2.5 1.5zM9 13l2.5 1.5-2.5 1.5z" fill="#1a8a30"/></svg></span><span class="itt" style="letter-spacing:-0.833px">Case</span></div>
<div class="it"><span class="ic"><svg width="16" height="16" viewBox="0 0 16 16"><path d="M5.2 5.5a5 5 0 1 1-1 4" stroke="#1a7ad0" stroke-width="2.4" fill="none"/><path d="M2 2.5v5h5z" fill="#1a7ad0"/></svg></span><span class="itt" style="letter-spacing:-0.033px">Loop</span></div>
<div class="it"><span class="ic"><svg width="16" height="16" viewBox="0 0 16 16"><path d="M4.2 4a5 5 0 1 1-1 4" stroke="#1a7ad0" stroke-width="2.4" fill="none"/><path d="M1 1v5h5z" fill="#1a7ad0"/><path d="M9.5 10l5 5M14.5 10l-5 5" stroke="#e00" stroke-width="1.8"/></svg></span><span class="itt" style="letter-spacing:-0.233px">Break Loop</span></div>
<div class="it"><span class="ic"><svg width="16" height="16" viewBox="0 0 16 16"><circle cx="3" cy="5.5" r="1.5" fill="#1a7ad0"/><circle cx="3" cy="11" r="1.5" fill="#1a7ad0"/><path d="M7 5.5h8M7 11h8" stroke="#1a7ad0" stroke-width="2"/></svg></span><span class="itt" style="letter-spacing:-0.700px">Let</span></div>
<div class="it"><span class="ic"><svg width="16" height="16" viewBox="0 0 16 16"><circle cx="3" cy="5.5" r="1.5" fill="#1a7ad0"/><circle cx="3" cy="11" r="1.5" fill="#1a7ad0"/><path d="M7 5.5h8M7 11h8" stroke="#1a7ad0" stroke-width="2"/></svg></span><span class="itt" style="letter-spacing:-0.114px">Update Variable</span></div>
<div class="it"><span class="ic"><svg width="16" height="16" viewBox="0 0 16 16"><rect x="1.5" y="1.5" width="13" height="10" fill="#fff" stroke="#333"/><rect x="1" y="1" width="14" height="2" fill="#3a8ae0"/><circle cx="10.5" cy="11" r="4.5" fill="#e01010"/><path d="M8.5 9l4 4M12.5 9l-4 4" stroke="#fff" stroke-width="1.5"/></svg></span><span class="itt" style="letter-spacing:-0.100px">Throw</span></div>
<div class="it"><span class="ic"><svg width="16" height="16" viewBox="0 0 16 16"><path d="M4.5 2.5q-1.8 0-1.8 1.8v2.2q0 1.4-1.2 1.9q1.2 0.5 1.2 1.9v2.2q0 1.8 1.8 1.8M6.5 2.5q1.8 0 1.8 1.8v2.2q0 1.4 1.2 1.9q-1.2 0.5-1.2 1.9v2.2q0 1.8-1.8 1.8" stroke="#1a6ad0" stroke-width="1.5" fill="none"/><path d="M14.5 2.5q-3.2 5.5 0 12" stroke="#1a6ad0" stroke-width="1.8" fill="none"/></svg></span><span class="itt" style="letter-spacing:-0.058px">Try/Catch Exceptions</span></div>
<div class="it"><span class="ic"><svg width="16" height="16" viewBox="0 0 16 16"><path d="M4.5 2.5q-1.8 0-1.8 1.8v2.2q0 1.4-1.2 1.9q1.2 0.5 1.2 1.9v2.2q0 1.8 1.8 1.8M6.5 2.5q1.8 0 1.8 1.8v2.2q0 1.4 1.2 1.9q-1.2 0.5-1.2 1.9v2.2q0 1.8-1.8 1.8" stroke="#1a6ad0" stroke-width="1.5" fill="none"/><path d="M14.5 2.5q-3.2 5 -1 9" stroke="#1a6ad0" stroke-width="1.8" fill="none"/><circle cx="12" cy="12.5" r="3" fill="#e01010"/><path d="M10.5 12.5h3" stroke="#fff" stroke-width="1.2"/></svg></span><span class="itt" style="letter-spacing:-0.084px">Try/Catch Server Connection</span></div>
<div class="it"><span class="ic"><svg width="16" height="16" viewBox="0 0 16 16"><path d="M1.5 8l6-5v3h7v4h-7v3z" fill="#1a7ad0"/></svg></span><span class="itt" style="letter-spacing:-0.100px">Return</span></div>
<div class="gap"></div>
<div class="gh"><span class="box"><svg width="9" height="9" viewBox="0 0 9 9"><rect x="0.5" y="0.5" width="8" height="8" rx="1.5" fill="none" stroke="#222"/><path d="M2 4.5h5" stroke="#222"/></svg></span><span class="ght" style="letter-spacing:-0.051px">Execution</span></div>
<div class="it"><span class="ic"><svg width="16" height="16" viewBox="0 0 16 16"><path d="M4.7 0.5h6.6l4.2 4.2v6.6l-4.2 4.2h-6.6l-4.2-4.2v-6.6z" fill="#f00"/><path d="M4.8 6.5v-2.3M7 5.5v-3.2M9.3 5.5v-3.8M11.5 5.5v-2.8" stroke="#fff" stroke-width="1.5" stroke-linecap="round"/><path d="M4 6h8.5v3.5l-1 3.5h-6l-1.5-3z" fill="#fff"/></svg></span><span class="itt" style="letter-spacing:-0.018px">Cancel Action Execution</span></div>
<div class="it"><span class="ic"><svg width="16" height="16" viewBox="0 0 16 16"><rect x="1" y="1" width="7" height="5" rx="2.5" fill="#b81818" stroke="#333" stroke-width="0.7"/><rect x="4" y="3" width="7" height="5" rx="2.5" fill="#c82020" stroke="#333" stroke-width="0.7"/><rect x="7" y="5" width="7" height="5" rx="2.5" fill="#d83030" stroke="#333" stroke-width="0.7"/><path d="M2.5 9v4h5M6 11.5l1.5 1.5-1.5 1.5" stroke="#222" fill="none"/><path d="M11.5 11.5l1-1v5" stroke="#222"/></svg></span><span class="itt" style="letter-spacing:-0.114px">Execute At Once</span></div>
<div class="it"><span class="ic"><svg width="16" height="16" viewBox="0 0 16 16"><path d="M1 6h12" stroke="#22a022" stroke-width="1.6"/><path d="M10 3l4 3-4 1z" fill="#22a022"/><path d="M15 10h-12" stroke="#b01010" stroke-width="1.6"/><path d="M6 13l-4-3 4-1z" fill="#b01010"/></svg></span><span class="itt" style="letter-spacing:-0.211px">Execute On</span></div>
<div class="it"><span class="ic"><svg width="16" height="16" viewBox="0 0 16 16"><path d="M8 0.5l7.5 7.5-7.5 7.5-7.5-7.5z" fill="#e8a010"/><path d="M8 3.5v5M6 6.5l2 2 2-2" stroke="#fff" stroke-width="1.3" fill="none"/><rect x="5" y="10" width="6" height="1.6" fill="#c01010"/></svg></span><span class="itt" style="letter-spacing:-0.006px">Solution Execution</span></div>
<div class="it"><span class="ic"><svg width="16" height="16" viewBox="0 0 16 16"><path d="M4.7 0.5h6.6l4.2 4.2v6.6l-4.2 4.2h-6.6l-4.2-4.2v-6.6z" fill="#6e6e6e"/><path d="M4.8 6.5v-2.3M7 5.5v-3.2M9.3 5.5v-3.8M11.5 5.5v-2.8" stroke="#fff" stroke-width="1.5" stroke-linecap="round"/><path d="M4 6h8.5v3.5l-1 3.5h-6l-1.5-3z" fill="#fff"/></svg></span><span class="itt" style="letter-spacing:-0.300px">User Cancel Behavior</span></div>
<div class="it"><span class="ic"><svg width="16" height="16" viewBox="0 0 16 16"><path d="M5.5 8v-3a2.5 2.5 0 0 1 5 0v3" stroke="#333" stroke-width="1.3" fill="none"/><rect x="3.5" y="7.5" width="9" height="7" fill="#f0e020" stroke="#333"/><rect x="7" y="10" width="2" height="2.5" fill="#333"/></svg></span><span class="itt" style="letter-spacing:0.044px">Lock/Unlock Clients</span></div>
<div class="gap"></div>
<div class="gh"><span class="box"><svg width="9" height="9" viewBox="0 0 9 9"><rect x="0.5" y="0.5" width="8" height="8" rx="1.5" fill="none" stroke="#222"/><path d="M2 4.5h5" stroke="#222"/></svg></span><span class="ght" style="letter-spacing:-0.066px">Miscellaneous</span></div>
<div class="it"><span class="ic"><svg width="16" height="16" viewBox="0 0 16 16"><path d="M4 3.5q-2.5 4.5 0 9" stroke="#666" stroke-width="1.6" fill="none"/><rect x="7" y="5.5" width="2" height="2" fill="#666"/><rect x="7" y="9.5" width="2" height="2" fill="#666"/></svg></span><span class="itt" style="letter-spacing:0.233px">Comment</span></div>
<div class="it"><span class="ic"><svg width="16" height="16" viewBox="0 0 16 16"><path d="M1.5 0.5h5l2 2v8h-7z" fill="#fff" stroke="#222"/><path d="M3 3.5h3M3 5.5h4M3 7.5h4" stroke="#222"/><path d="M6.5 5.5h5.5l2.5 2.5v7.5h-8z" fill="#fff" stroke="#1a3ab0"/><path d="M8 9.5h5M8 11.5h5M8 13.5h5" stroke="#1a3ab0"/></svg></span><span class="itt" style="letter-spacing:-0.016px">Copy/Paste Clipboard</span></div>
<div class="it"><span class="ic"><svg width="16" height="16" viewBox="0 0 16 16"><rect x="1.5" y="1.5" width="13" height="9" rx="1" fill="#dde" stroke="#333"/><path d="M2 2l6 5 6-5M2 10l4.5-4M14 10l-4.5-4" stroke="#333" fill="none"/><path d="M5 13.5h8" stroke="#22a022" stroke-width="1.8"/><path d="M6.5 10.5l-4 3 4 3z" fill="#22a022"/></svg></span><span class="itt" style="letter-spacing:-0.290px">Embedded Message Back</span></div>
<div class="it"><span class="ic"><svg width="16" height="16" viewBox="0 0 16 16"><path d="M2 3.5h12M2 6h12M2 8.5h12M2 11h12M2 13.5h12" stroke="#222" stroke-width="1.2" stroke-dasharray="2 1"/></svg></span><span class="itt" style="letter-spacing:-0.220px">Log Message</span></div>
<div class="it"><span class="ic"><svg width="16" height="16" viewBox="0 0 16 16"><rect x="0.5" y="5.5" width="15" height="5" fill="#bfe0f8" stroke="#333"/><path d="M3 6v2M5.5 6v2M8 6v2M10.5 6v2M13 6v2" stroke="#333"/></svg></span><span class="itt" style="letter-spacing:-0.086px">Measure Controls</span></div>
<div class="it"><span class="ic"><svg width="16" height="16" viewBox="0 0 16 16"><circle cx="8" cy="5" r="4" fill="#1aa030" stroke="#222" stroke-width="0.6"/><path d="M6 4.5c1-1 2 0 2 1s1.5 0.5 2-0.5" stroke="#2050c0" stroke-width="1.2" fill="none"/><text x="0" y="15.5" font-size="5" font-weight="bold" font-family="Liberation Sans" fill="#222" letter-spacing="0.2">LANG</text></svg></span><span class="itt" style="letter-spacing:-0.336px">Set Language</span></div>
<div class="it"><span class="ic"><svg width="16" height="16" viewBox="0 0 16 16"><rect x="1" y="1" width="14" height="14" fill="#333"/><path d="M15 1v14h-14z" fill="#fff" stroke="#333"/></svg></span><span class="itt" style="letter-spacing:-0.350px">Set Theme</span></div>
<div class="gap"></div></div></div><div class="abs" style="left:611px;top:34px;width:104px;height:24px;background:#f9f9f9;border:1px solid #e5e5e5;border-bottom:none"></div><div class="abs" style="left:611px;top:56px;width:423px;height:630px;background:#f9f9f9;border:1px solid #e5e5e5"></div><div class="abs" style="left:612px;top:55px;width:102px;height:2px;background:#f9f9f9"></div><div class="t" style="left:620px;top:38px;color:#000;letter-spacing:-0.1px">OnImageClicked</div><div class="abs" style="left:621px;top:68px;width:405px;height:25px;background:#efefef"></div><div class="abs" style="left:671px;top:69px;width:1px;height:22px;background:#cfcfcf"></div><div class="abs" style="left:745px;top:69px;width:1px;height:22px;background:#cfcfcf"></div><div class="abs" style="left:810px;top:69px;width:1px;height:22px;background:#cfcfcf"></div><div class="abs" style="left:862px;top:69px;width:1px;height:22px;background:#cfcfcf"></div><div class="abs" style="left:892px;top:69px;width:1px;height:22px;background:#cfcfcf"></div><div class="abs" style="left:922px;top:69px;width:1px;height:22px;background:#cfcfcf"></div><div class="abs" style="left:814px;top:69px;width:22px;height:22px;background:#cce4f7;border:1px solid #2a7fd6"></div><div class="abs" style="left:836px;top:69px;width:22px;height:22px;background:#cce4f7;border:1px solid #2a7fd6"></div><div class="abs" style="left:626px;top:72px;width:16px;height:16px"><svg width="16" height="16" viewBox="0 0 16 16"><path d="M2 5v5h5z" fill="#9ab4e4"/><path d="M4.5 7.8Q7 4.2 10 4.2Q14 4.2 14 7.3Q14 9.5 12.3 10.8" stroke="#9ab4e4" stroke-width="1.2" fill="none"/></svg></div><div class="abs" style="left:648px;top:72px;width:16px;height:16px"><svg width="16" height="16" viewBox="0 0 16 16"><path d="M14 5v5h-5z" fill="#9ab4e4"/><path d="M11.5 7.8Q9 4.2 6 4.2Q2 4.2 2 7.3Q2 9.5 3.7 10.8" stroke="#9ab4e4" stroke-width="1.2" fill="none"/></svg></div><div class="abs" style="left:679px;top:72px;width:16px;height:16px"><svg width="16" height="16" viewBox="0 0 16 16"><path d="M4 1l3.5 8M11 1l-3.5 8" stroke="#999" stroke-width="1"/><ellipse cx="5" cy="12" rx="2" ry="2.3" fill="none" stroke="#98acdc" stroke-width="1"/><ellipse cx="10.3" cy="12" rx="2" ry="2.3" fill="none" stroke="#98acdc" stroke-width="1"/></svg></div><div class="abs" style="left:700px;top:72px;width:16px;height:16px"><svg width="16" height="16" viewBox="0 0 16 16"><path d="M2 2.5l12 11.5M14 2.5l-12 11.5" stroke="#d6a4a4" stroke-width="2.1"/></svg></div><div class="abs" style="left:722px;top:72px;width:16px;height:16px"><svg width="16" height="16" viewBox="0 0 16 16"><path d="M1.5 1.5h5l2.5 2.5v6.5h-7.5z" fill="#fff" stroke="#aaa"/><path d="M3 4.5h3M3 6.5h4M3 8.5h4" stroke="#aaa"/><path d="M7.5 5.5h5l2.5 2.5v6.5h-7.5z" fill="#fff" stroke="#9ab0d8"/><path d="M9 8.5h3M9 10.5h4.5M9 12.5h4.5" stroke="#9ab0d8"/></svg></div><div class="abs" style="left:752px;top:72px;width:16px;height:16px"><svg width="16" height="16" viewBox="0 0 16 16"><rect x="1" y="2.5" width="12" height="12" rx="1.5" fill="#8e7c38" stroke="#111" stroke-width="1"/><path d="M4.5 3.5v-1.5h1.5l1-1.2 1 1.2h1.5v1.5z" fill="#fff" stroke="#111" stroke-width="0.9"/><path d="M7.5 7.5h5.5l2.5 2.5v5.5h-8z" fill="#fff" stroke="#0a2a9a" stroke-width="1.1"/><path d="M9.5 10.5h3.5M9.5 12.5h4.5M9.5 14.5h4.5" stroke="#111" stroke-width="0.9"/></svg></div><div class="abs" style="left:776px;top:72px;width:16px;height:16px"><svg width="16" height="16" viewBox="0 0 16 16"><path d="M7.5 1.5v12.5M1.2 7.8h12.8" stroke="#a4d6a4" stroke-width="2.6"/></svg></div><div class="abs" style="left:795px;top:72px;width:16px;height:16px"><svg width="16" height="16" viewBox="0 0 16 16"><path d="M2.5 8h6l-3 3z" fill="#666"/></svg></div><div class="abs" style="left:817px;top:72px;width:16px;height:16px"><svg width="16" height="16" viewBox="0 0 16 16"><circle cx="8" cy="8" r="6.3" fill="#2a90e8" stroke="#1060b0" stroke-width="0.6"/><circle cx="8" cy="8" r="5.2" fill="none" stroke="#8cc8f8" stroke-width="0.8"/><circle cx="8" cy="4.8" r="1.1" fill="#fff"/><rect x="7" y="6.8" width="2" height="5.2" fill="#fff"/></svg></div><div class="abs" style="left:839px;top:72px;width:16px;height:16px"><svg width="16" height="16" viewBox="0 0 16 16"><path d="M8 1.5l7 12.5h-14z" fill="#f8b030" stroke="#906010" stroke-width="0.9" stroke-linejoin="round"/><rect x="7.2" y="5.5" width="1.6" height="5" fill="#222"/><rect x="7.2" y="11.2" width="1.6" height="1.6" fill="#222"/></svg></div><div class="abs" style="left:868px;top:72px;width:16px;height:16px"><svg width="16" height="16" viewBox="0 0 16 16"><text x="0" y="12" font-size="11" font-weight="bold" font-family="Liberation Sans" fill="#444">(:</text><rect x="10.5" y="2.5" width="4" height="10" rx="2" fill="#222"/><rect x="11.3" y="6" width="2.4" height="4" fill="#fff"/><path d="M11 12.5l1.5 3.5 1.5-3.5z" fill="#222"/><path d="M12.5 0v3" stroke="#222" stroke-width="1.5"/></svg></div><div class="abs" style="left:899px;top:72px;width:16px;height:16px"><svg width="16" height="16" viewBox="0 0 16 16"><circle cx="8" cy="8" r="7.8" fill="#eab2b2"/></svg></div><div class="abs" style="left:928px;top:72px;width:16px;height:16px"><svg width="16" height="16" viewBox="0 0 16 16"><path d="M1 8l6-6v3.5h7.5v5h-7.5v3.5z" fill="#fff" stroke="#a8a8a8"/></svg></div><div class="abs" style="left:951px;top:72px;width:16px;height:16px"><svg width="16" height="16" viewBox="0 0 16 16"><path d="M15 8l-6-6v3.5h-7.5v5h7.5v3.5z" fill="#fff" stroke="#a8a8a8"/></svg></div><div class="abs" style="left:621px;top:92px;width:405px;height:600px;background:#fff;border:1px solid #6a6a6a;border-top:1px solid #a4a4a4;box-shadow:inset 0 1px 0 #666"></div><div class="abs" style="left:627px;top:112px;width:398px;height:1px;background:#8c8c8c"></div><div class="abs" style="left:627px;top:107px;width:1px;height:248px;background:repeating-linear-gradient(#9a9a9a 0 1px,transparent 1px 2px)"></div><div class="abs" style="left:628px;top:123px;width:7px;height:1px;background:repeating-linear-gradient(90deg,#9a9a9a 0 1px,transparent 1px 2px)"></div><div class="abs" style="left:628px;top:355px;width:22px;height:1px;background:repeating-linear-gradient(90deg,#9a9a9a 0 1px,transparent 1px 2px)"></div><div class="abs" style="left:639px;top:128px;width:1px;height:16px;background:repeating-linear-gradient(#9a9a9a 0 1px,transparent 1px 2px)"></div><div class="abs" style="left:640px;top:144px;width:7px;height:1px;background:repeating-linear-gradient(90deg,#9a9a9a 0 1px,transparent 1px 2px)"></div><div class="abs" style="left:651px;top:149px;width:1px;height:111px;background:repeating-linear-gradient(#9a9a9a 0 1px,transparent 1px 2px)"></div><div class="abs" style="left:652px;top:165px;width:7px;height:1px;background:repeating-linear-gradient(90deg,#9a9a9a 0 1px,transparent 1px 2px)"></div><div class="abs" style="left:652px;top:260px;width:7px;height:1px;background:repeating-linear-gradient(90deg,#9a9a9a 0 1px,transparent 1px 2px)"></div><div class="abs" style="left:663px;top:170px;width:1px;height:54px;background:repeating-linear-gradient(#9a9a9a 0 1px,transparent 1px 2px)"></div><div class="abs" style="left:664px;top:186px;width:18px;height:1px;background:repeating-linear-gradient(90deg,#9a9a9a 0 1px,transparent 1px 2px)"></div><div class="abs" style="left:664px;top:223px;width:18px;height:1px;background:repeating-linear-gradient(90deg,#9a9a9a 0 1px,transparent 1px 2px)"></div><div class="abs" style="left:663px;top:265px;width:1px;height:54px;background:repeating-linear-gradient(#9a9a9a 0 1px,transparent 1px 2px)"></div><div class="abs" style="left:664px;top:281px;width:18px;height:1px;background:repeating-linear-gradient(90deg,#9a9a9a 0 1px,transparent 1px 2px)"></div><div class="abs" style="left:664px;top:318px;width:18px;height:1px;background:repeating-linear-gradient(90deg,#9a9a9a 0 1px,transparent 1px 2px)"></div><div class="abs" style="left:623px;top:98px;width:9px;height:9px"><svg width="9" height="9" viewBox="0 0 9 9"><rect x="0.5" y="0.5" width="8" height="8" fill="#fff" stroke="#111"/><path d="M2 4.5h5" stroke="#111"/></svg></div><div class="abs" style="left:637px;top:94px;width:16px;height:16px"><svg width="16" height="16" viewBox="0 0 16 16"><path d="M5.5 1.3h7l-3 4.2h3.2l-8.2 9.5 2.3-6.5h-3.3z" fill="#f6b935" stroke="#b06a10" stroke-width="1" stroke-linejoin="round"/><path d="M6.3 2.5h4.5l-1.8 2.5" stroke="#fff0b0" stroke-width="0.9" fill="none"/></svg></div><div class="t" style="left:654px;top:95px;color:#4a4a4a;letter-spacing:-0.1px">OnImageClicked 'Chart1'</div><div class="abs" style="left:635px;top:119px;width:9px;height:9px"><svg width="9" height="9" viewBox="0 0 9 9"><rect x="0.5" y="0.5" width="8" height="8" fill="#fff" stroke="#111"/><path d="M2 4.5h5" stroke="#111"/></svg></div><div class="abs" style="left:649px;top:115px;width:16px;height:16px"><svg width="16" height="16" viewBox="0 0 16 16"><path d="M5.5 1.3h7l-3 4.2h3.2l-8.2 9.5 2.3-6.5h-3.3z" fill="#f6b935" stroke="#b06a10" stroke-width="1" stroke-linejoin="round"/><path d="M6.3 2.5h4.5l-1.8 2.5" stroke="#fff0b0" stroke-width="0.9" fill="none"/></svg></div><div class="t" style="left:666px;top:116px;color:#4a4a4a;letter-spacing:-0.1px">On Click</div><div class="abs" style="left:716px;top:117px;width:11px;height:11px;border:1px solid #333;background:#fff"></div><div class="t" style="left:730px;top:116px;color:#000;letter-spacing:-0.1px">On Enter</div><div class="abs" style="left:781px;top:117px;width:11px;height:11px;border:1px solid #333;background:#fff"></div><div class="t" style="left:795px;top:116px;color:#000;letter-spacing:-0.5px">On Escape</div><div class="abs" style="left:647px;top:140px;width:9px;height:9px"><svg width="9" height="9" viewBox="0 0 9 9"><rect x="0.5" y="0.5" width="8" height="8" fill="#fff" stroke="#111"/><path d="M2 4.5h5" stroke="#111"/></svg></div><div class="abs" style="left:661px;top:137px;width:16px;height:16px"><svg width="16" height="16" viewBox="0 0 16 16"><path d="M4.8 5.2c0-2 1.5-3.2 3.4-3.2s3.4 1.2 3.4 3c0 2.2-2.6 2.4-2.6 4.6" stroke="#1a7ad0" stroke-width="2.2" fill="none"/><circle cx="9" cy="13.2" r="1.4" fill="#1a7ad0"/></svg></div><div class="t" style="left:678px;top:137px;color:#4a4a4a;letter-spacing:-0.1px">If</div><div class="t" style="left:690px;top:137px;color:#000;letter-spacing:-0.55px">$PERSISTENT/Root/dark</div><div class="t" style="left:819px;top:137px;color:#000;letter-spacing:-0.1px">=</div><div class="t" style="left:828px;top:137px;color:#000;letter-spacing:-0.1px">1</div><div class="abs" style="left:838px;top:137px;width:16px;height:15px"><svg width="16" height="15" viewBox="0 0 16 15"><rect x="0" y="0" width="16" height="15" fill="#f0f0f0"/><path d="M0.5 15V0.5H16" stroke="#fff" fill="none"/><path d="M0 14.5h15.5V0" stroke="#555" fill="none"/><path d="M4.8 1.5l5.6 6.4M10.4 1.5l-5.6 6.4" stroke="#222" stroke-width="1.15"/><path d="M2.5 13v-3.5h1.5v2h-1.5M5.5 13v-3.5h1.5v3.5M5.5 11.5h1.5M8 9.5h3M9.5 9.5v3.5M11.5 9.5v3.5M13.5 9.5v3.5M11.5 11.5h2" stroke="#222" stroke-width="0.9" fill="none"/></svg></div><div class="abs" style="left:659px;top:161px;width:9px;height:9px"><svg width="9" height="9" viewBox="0 0 9 9"><rect x="0.5" y="0.5" width="8" height="8" fill="#fff" stroke="#111"/><path d="M2 4.5h5" stroke="#111"/></svg></div><div class="abs" style="left:671px;top:157px;width:16px;height:16px"><svg width="16" height="16" viewBox="0 0 16 16"><circle cx="8.5" cy="8.5" r="6.3" fill="#1db41d"/><path d="M5.5 8.5l2 2 3.8-3.8" stroke="#fff" stroke-width="2" fill="none"/></svg></div><div class="t" style="left:690px;top:158px;color:#4a4a4a;letter-spacing:-0.1px">Then</div><div class="abs" style="left:683px;top:178px;width:16px;height:16px"><svg width="16" height="16" viewBox="0 0 16 16"><path d="M1 7.5h6M4.5 5l2.5 2.5-2.5 2.5" stroke="#222" stroke-width="1" fill="none"/><path d="M10 4.5h5l1.5 1.5v3l-1.5 1.5h-5l-1.5-1.5v-3z" fill="#c41a1a" stroke="#222" stroke-width="0.9"/><path d="M10 5.7h5" stroke="#f0a0a0" stroke-width="0.8"/><path d="M9.5 6.5v2.5" stroke="#f0a0a0" stroke-width="0.7"/></svg></div><div class="t" style="left:702px;top:179px;color:#4a4a4a;letter-spacing:-0.1px">Update Node(s)</div><div class="t" style="left:790px;top:179px;color:#000;letter-spacing:-0.55px">$PERSISTENT/Root/dark</div><div class="abs" style="left:918px;top:179px;width:16px;height:15px"><svg width="16" height="15" viewBox="0 0 16 15"><rect x="0" y="0" width="16" height="15" fill="#f0f0f0"/><path d="M0.5 15V0.5H16" stroke="#fff" fill="none"/><path d="M0 14.5h15.5V0" stroke="#555" fill="none"/><path d="M4.8 1.5l5.6 6.4M10.4 1.5l-5.6 6.4" stroke="#222" stroke-width="1.15"/><path d="M2.5 13v-3.5h1.5v2h-1.5M5.5 13v-3.5h1.5v3.5M5.5 11.5h1.5M8 9.5h3M9.5 9.5v3.5M11.5 9.5v3.5M13.5 9.5v3.5M11.5 11.5h2" stroke="#222" stroke-width="0.9" fill="none"/></svg></div><div class="t" style="left:713px;top:195px;color:#4a4a4a;letter-spacing:-0.1px">with Result of</div><div class="t" style="left:790px;top:195px;color:#000;letter-spacing:-0.1px">0</div><div class="abs" style="left:918px;top:195px;width:16px;height:15px"><svg width="16" height="15" viewBox="0 0 16 15"><rect x="0" y="0" width="16" height="15" fill="#f0f0f0"/><path d="M0.5 15V0.5H16" stroke="#fff" fill="none"/><path d="M0 14.5h15.5V0" stroke="#555" fill="none"/><path d="M4.8 1.5l5.6 6.4M10.4 1.5l-5.6 6.4" stroke="#222" stroke-width="1.15"/><path d="M2.5 13v-3.5h1.5v2h-1.5M5.5 13v-3.5h1.5v3.5M5.5 11.5h1.5M8 9.5h3M9.5 9.5v3.5M11.5 9.5v3.5M13.5 9.5v3.5M11.5 11.5h2" stroke="#222" stroke-width="0.9" fill="none"/></svg></div><div class="abs" style="left:683px;top:273px;width:16px;height:16px"><svg width="16" height="16" viewBox="0 0 16 16"><path d="M1 7.5h6M4.5 5l2.5 2.5-2.5 2.5" stroke="#222" stroke-width="1" fill="none"/><path d="M10 4.5h5l1.5 1.5v3l-1.5 1.5h-5l-1.5-1.5v-3z" fill="#c41a1a" stroke="#222" stroke-width="0.9"/><path d="M10 5.7h5" stroke="#f0a0a0" stroke-width="0.8"/><path d="M9.5 6.5v2.5" stroke="#f0a0a0" stroke-width="0.7"/></svg></div><div class="t" style="left:702px;top:274px;color:#4a4a4a;letter-spacing:-0.1px">Update Node(s)</div><div class="t" style="left:790px;top:274px;color:#000;letter-spacing:-0.55px">$PERSISTENT/Root/dark</div><div class="abs" style="left:918px;top:274px;width:16px;height:15px"><svg width="16" height="15" viewBox="0 0 16 15"><rect x="0" y="0" width="16" height="15" fill="#f0f0f0"/><path d="M0.5 15V0.5H16" stroke="#fff" fill="none"/><path d="M0 14.5h15.5V0" stroke="#555" fill="none"/><path d="M4.8 1.5l5.6 6.4M10.4 1.5l-5.6 6.4" stroke="#222" stroke-width="1.15"/><path d="M2.5 13v-3.5h1.5v2h-1.5M5.5 13v-3.5h1.5v3.5M5.5 11.5h1.5M8 9.5h3M9.5 9.5v3.5M11.5 9.5v3.5M13.5 9.5v3.5M11.5 11.5h2" stroke="#222" stroke-width="0.9" fill="none"/></svg></div><div class="t" style="left:713px;top:290px;color:#4a4a4a;letter-spacing:-0.1px">with Result of</div><div class="t" style="left:790px;top:290px;color:#000;letter-spacing:-0.1px">1</div><div class="abs" style="left:918px;top:290px;width:16px;height:15px"><svg width="16" height="15" viewBox="0 0 16 15"><rect x="0" y="0" width="16" height="15" fill="#f0f0f0"/><path d="M0.5 15V0.5H16" stroke="#fff" fill="none"/><path d="M0 14.5h15.5V0" stroke="#555" fill="none"/><path d="M4.8 1.5l5.6 6.4M10.4 1.5l-5.6 6.4" stroke="#222" stroke-width="1.15"/><path d="M2.5 13v-3.5h1.5v2h-1.5M5.5 13v-3.5h1.5v3.5M5.5 11.5h1.5M8 9.5h3M9.5 9.5v3.5M11.5 9.5v3.5M13.5 9.5v3.5M11.5 11.5h2" stroke="#222" stroke-width="0.9" fill="none"/></svg></div><div class="abs" style="left:683px;top:215px;width:16px;height:16px"><svg width="16" height="16" viewBox="0 0 16 16"><path d="M3.8 12Q1.3 8.8 3 5.5Q4.5 3.2 7.2 3" stroke="#16a016" stroke-width="1.9" fill="none" stroke-linecap="round"/><path d="M6.8 0L10.8 2.9L6.8 6.2z" fill="#16a016"/><path d="M12.8 4.2Q15.2 7.5 13.4 10.6Q12 12.8 9.2 13" stroke="#16a016" stroke-width="1.9" fill="none" stroke-linecap="round"/><path d="M9.4 16L5.2 13.1L9.4 9.8z" fill="#16a016"/></svg></div><div class="t" style="left:702px;top:217px;color:#4a4a4a;letter-spacing:-0.1px">Reload</div><div class="t" style="left:744px;top:217px;color:#000;letter-spacing:-0.1px">Chart1 (Chart)</div><div class="abs" style="left:820px;top:216px;width:15px;height:14px;background:#e6e6e6;border:1px solid #fff;border-right-color:#ccc;border-bottom-color:#ccc;box-shadow:0 0 0 0.5px #f0f0f0"></div><div class="abs" style="left:820px;top:216px;width:16px;height:16px"><svg width="16" height="16" viewBox="0 0 16 16"><path d="M4 7h7l-3.5 3.5z" fill="#111"/></svg></div><div class="abs" style="left:839px;top:216px;width:16px;height:15px"><svg width="16" height="15" viewBox="0 0 16 15"><rect x="0" y="0" width="16" height="15" fill="#f0f0f0"/><path d="M0.5 15V0.5H16" stroke="#fff" fill="none"/><path d="M0 14.5h15.5V0" stroke="#555" fill="none"/><path d="M4.8 1.5l5.6 6.4M10.4 1.5l-5.6 6.4" stroke="#222" stroke-width="1.15"/><path d="M2.5 13v-3.5h1.5v2h-1.5M5.5 13v-3.5h1.5v3.5M5.5 11.5h1.5M8 9.5h3M9.5 9.5v3.5M11.5 9.5v3.5M13.5 9.5v3.5M11.5 11.5h2" stroke="#222" stroke-width="0.9" fill="none"/></svg></div><div class="t" style="left:702px;top:233px;color:#4a4a4a;letter-spacing:-0.1px">On Error</div><div class="abs" style="left:751px;top:235px;width:11px;height:11px"><svg width="11" height="11" viewBox="0 0 11 11"><circle cx="5.5" cy="5.5" r="4.5" fill="#fff" stroke="#444"/><circle cx="5.5" cy="5.5" r="2.3" fill="#222"/></svg></div><div class="t" style="left:765px;top:233px;color:#000;letter-spacing:-0.2px">Abort Script</div><div class="abs" style="left:833px;top:235px;width:11px;height:11px"><svg width="11" height="11" viewBox="0 0 11 11"><circle cx="5.5" cy="5.5" r="4.5" fill="#fff" stroke="#444"/></svg></div><div class="t" style="left:847px;top:233px;color:#000;letter-spacing:-0.1px">Continue</div><div class="abs" style="left:901px;top:235px;width:11px;height:11px"><svg width="11" height="11" viewBox="0 0 11 11"><circle cx="5.5" cy="5.5" r="4.5" fill="#fff" stroke="#444"/></svg></div><div class="t" style="left:916px;top:233px;color:#000;letter-spacing:-0.1px">Throw</div><div class="abs" style="left:683px;top:310px;width:16px;height:16px"><svg width="16" height="16" viewBox="0 0 16 16"><path d="M3.8 12Q1.3 8.8 3 5.5Q4.5 3.2 7.2 3" stroke="#16a016" stroke-width="1.9" fill="none" stroke-linecap="round"/><path d="M6.8 0L10.8 2.9L6.8 6.2z" fill="#16a016"/><path d="M12.8 4.2Q15.2 7.5 13.4 10.6Q12 12.8 9.2 13" stroke="#16a016" stroke-width="1.9" fill="none" stroke-linecap="round"/><path d="M9.4 16L5.2 13.1L9.4 9.8z" fill="#16a016"/></svg></div><div class="t" style="left:702px;top:312px;color:#4a4a4a;letter-spacing:-0.1px">Reload</div><div class="t" style="left:744px;top:312px;color:#000;letter-spacing:-0.1px">Chart1 (Chart)</div><div class="abs" style="left:820px;top:311px;width:15px;height:14px;background:#e6e6e6;border:1px solid #fff;border-right-color:#ccc;border-bottom-color:#ccc;box-shadow:0 0 0 0.5px #f0f0f0"></div><div class="abs" style="left:820px;top:311px;width:16px;height:16px"><svg width="16" height="16" viewBox="0 0 16 16"><path d="M4 7h7l-3.5 3.5z" fill="#111"/></svg></div><div class="abs" style="left:839px;top:311px;width:16px;height:15px"><svg width="16" height="15" viewBox="0 0 16 15"><rect x="0" y="0" width="16" height="15" fill="#f0f0f0"/><path d="M0.5 15V0.5H16" stroke="#fff" fill="none"/><path d="M0 14.5h15.5V0" stroke="#555" fill="none"/><path d="M4.8 1.5l5.6 6.4M10.4 1.5l-5.6 6.4" stroke="#222" stroke-width="1.15"/><path d="M2.5 13v-3.5h1.5v2h-1.5M5.5 13v-3.5h1.5v3.5M5.5 11.5h1.5M8 9.5h3M9.5 9.5v3.5M11.5 9.5v3.5M13.5 9.5v3.5M11.5 11.5h2" stroke="#222" stroke-width="0.9" fill="none"/></svg></div><div class="t" style="left:702px;top:328px;color:#4a4a4a;letter-spacing:-0.1px">On Error</div><div class="abs" style="left:751px;top:330px;width:11px;height:11px"><svg width="11" height="11" viewBox="0 0 11 11"><circle cx="5.5" cy="5.5" r="4.5" fill="#fff" stroke="#444"/><circle cx="5.5" cy="5.5" r="2.3" fill="#222"/></svg></div><div class="t" style="left:765px;top:328px;color:#000;letter-spacing:-0.2px">Abort Script</div><div class="abs" style="left:833px;top:330px;width:11px;height:11px"><svg width="11" height="11" viewBox="0 0 11 11"><circle cx="5.5" cy="5.5" r="4.5" fill="#fff" stroke="#444"/></svg></div><div class="t" style="left:847px;top:328px;color:#000;letter-spacing:-0.1px">Continue</div><div class="abs" style="left:901px;top:330px;width:11px;height:11px"><svg width="11" height="11" viewBox="0 0 11 11"><circle cx="5.5" cy="5.5" r="4.5" fill="#fff" stroke="#444"/></svg></div><div class="t" style="left:916px;top:328px;color:#000;letter-spacing:-0.1px">Throw</div><div class="abs" style="left:659px;top:255px;width:9px;height:9px"><svg width="9" height="9" viewBox="0 0 9 9"><rect x="0.5" y="0.5" width="8" height="8" fill="#fff" stroke="#111"/><path d="M2 4.5h5" stroke="#111"/></svg></div><div class="abs" style="left:671px;top:252px;width:16px;height:16px"><svg width="16" height="16" viewBox="0 0 16 16"><circle cx="8.5" cy="8.5" r="6.3" fill="#e01818"/><path d="M6 6l5 5M11 6l-5 5" stroke="#fff" stroke-width="2"/></svg></div><div class="t" style="left:690px;top:253px;color:#4a4a4a;letter-spacing:-0.1px">Else</div><div class="abs" style="left:649px;top:347px;width:16px;height:16px"><svg width="16" height="16" viewBox="0 0 16 16"><path d="M5.5 1.3h7l-3 4.2h3.2l-8.2 9.5 2.3-6.5h-3.3z" fill="#f6b935" stroke="#b06a10" stroke-width="1" stroke-linejoin="round"/><path d="M6.3 2.5h4.5l-1.8 2.5" stroke="#fff0b0" stroke-width="0.9" fill="none"/></svg></div><div class="t" style="left:666px;top:348px;color:#4a4a4a;letter-spacing:-0.1px">On Long Click</div><div class="abs" style="left:1044px;top:36px;width:2px;height:640px;background:#d4d4d4"></div><div class="t" style="left:1056px;top:39px;letter-spacing:-0.2px">Action Groups:</div><div class="abs" style="left:1058px;top:59px;width:16px;height:16px"><svg width="16" height="16" viewBox="0 0 16 16"><path d="M8.5 2v12.5M2.3 8.2h12.5" stroke="#0a8a0a" stroke-width="2.8"/><path d="M8 2.5v11" stroke="#30c030" stroke-width="0.8"/></svg></div><div class="abs" style="left:1081px;top:60px;width:16px;height:16px"><svg width="16" height="16" viewBox="0 0 16 16"><path d="M2 2.5l12 11.5M14 2.5l-12 11.5" stroke="#d6a4a4" stroke-width="2.1"/></svg></div><div class="abs" style="left:1104px;top:57px;width:1px;height:22px;background:#cfcfcf"></div><div class="abs" style="left:1111px;top:60px;width:16px;height:16px"><svg width="16" height="16" viewBox="0 0 16 16"><path d="M5.5 1.5h2M6.5 1.5v13h3" stroke="#aaa" fill="none"/><rect x="8.5" y="3.5" width="7" height="3" fill="#fff" stroke="#aaa"/><rect x="8.5" y="12.5" width="7" height="3" fill="#fff" stroke="#aaa"/><path d="M12 6.5v6" stroke="#aaa" stroke-dasharray="1 1"/><path d="M1.5 5.5h2v3h2l-3 3-3-3h2z" fill="#e89090"/></svg></div><div class="abs" style="left:1133px;top:60px;width:16px;height:16px"><svg width="16" height="16" viewBox="0 0 16 16"><path d="M4.5 1.5h2M5.5 1.5v3h3" stroke="#aaa" fill="none"/><rect x="8.5" y="2.5" width="7" height="3" fill="#f8d090" stroke="#aaa"/><path d="M5.5 6.5v8h10v-8" stroke="#aaa" fill="none" stroke-dasharray="1 1"/><path d="M3.5 5.5l3 3h-2v3h-2v-3h-2z" fill="#e89090"/></svg></div><div class="abs" style="left:1054px;top:80px;width:160px;height:600px;background:#fff;border:1px solid #6a6a6a;border-top:1px solid #a4a4a4;box-shadow:inset 0 1px 0 #666"></div>
</body></html>
